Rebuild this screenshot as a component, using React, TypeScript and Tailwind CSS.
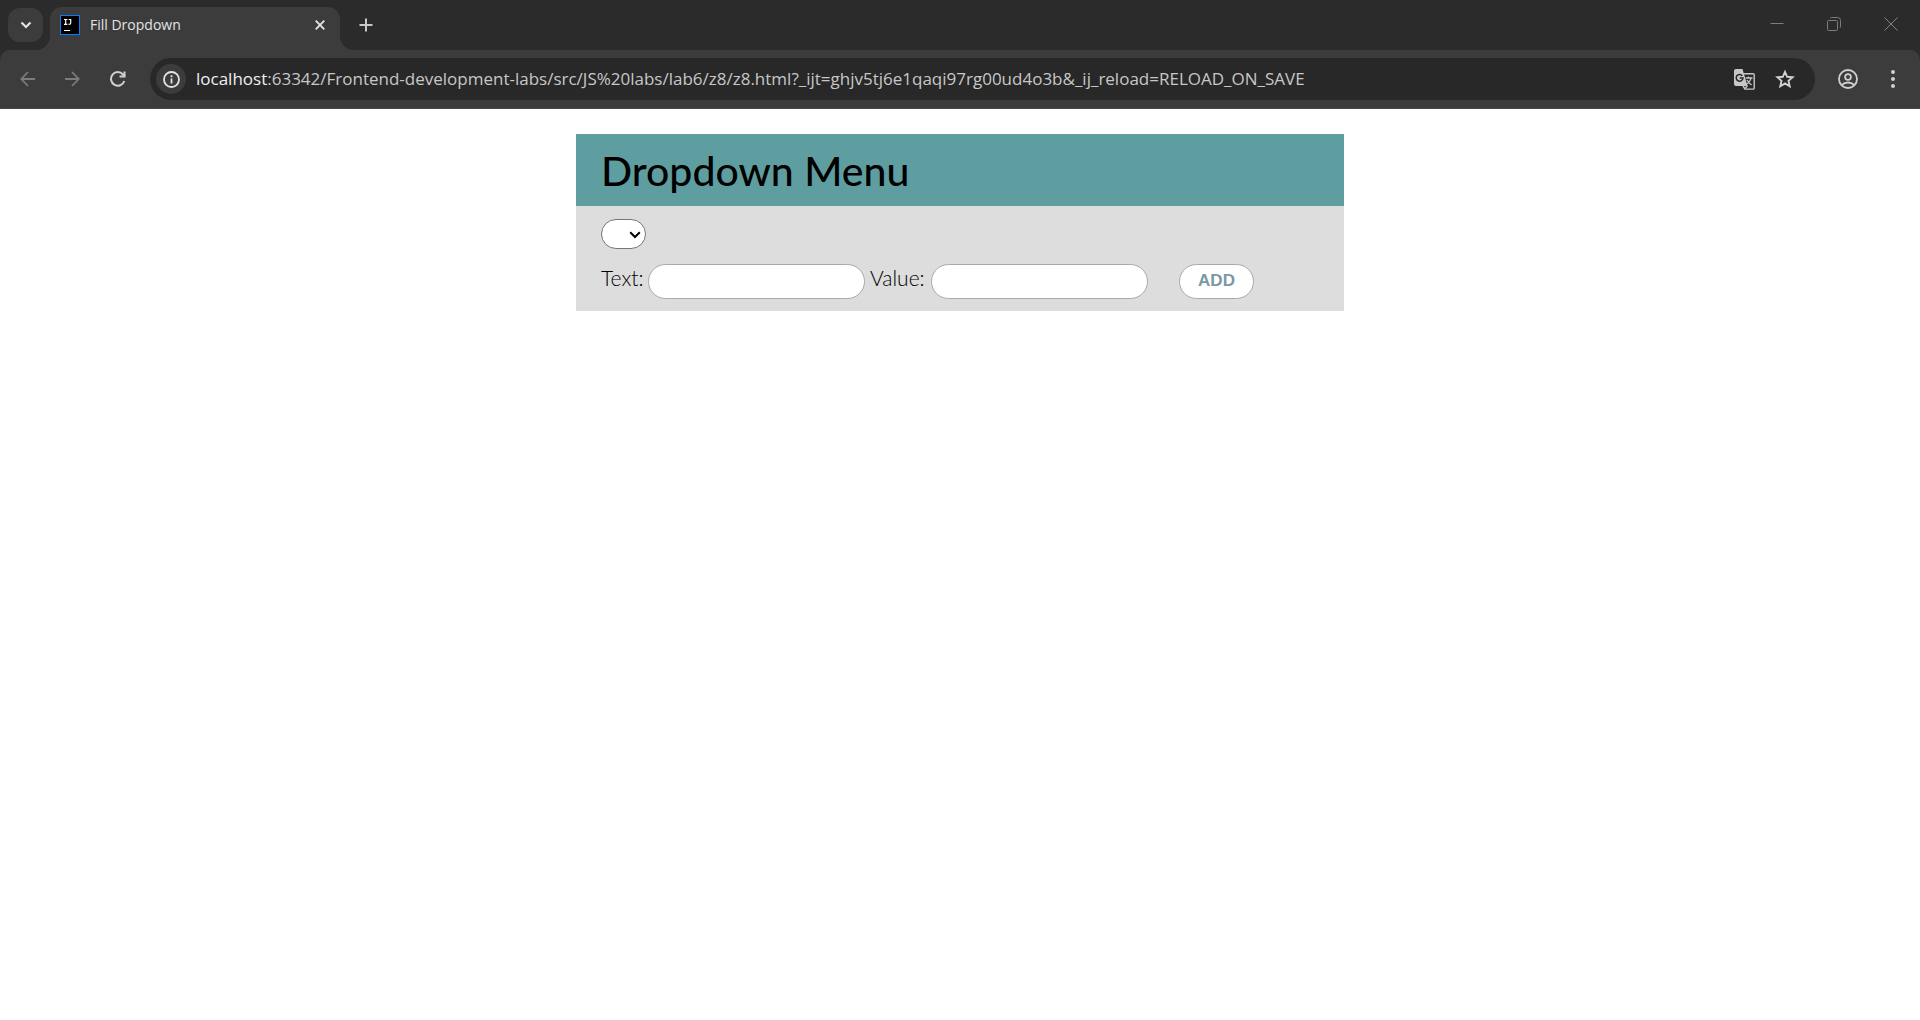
import { ReactNode } from "react";

function IconButton({ label, className = "", children }: { label: string; className?: string; children: ReactNode }) {
  return (
    <button type="button" aria-label={label} className={`flex shrink-0 items-center justify-center ${className}`}>
      {children}
    </button>
  );
}

function IdeaLogo() {
  return (
    <svg className="h-5 w-5 shrink-0" viewBox="0 0 20 20" aria-hidden="true">
      <rect width="20" height="20" fill="#087cfa" />
      <rect x="1" y="1" width="18" height="18" fill="#000" />
      <path d="M4 4.500h3.400M5.700 4.500v4.800M4 9.300h3.400M8.700 4.500h2v3.600c0 1-1 1.400-2.200 1M4 15.500h6" fill="none" stroke="#fff" strokeWidth="1.200" />
    </svg>
  );
}

function TabStrip() {
  return (
    <header className="flex h-[50px] items-end bg-[#2b2b2b] pl-2">
      <IconButton label="Search tabs" className="mb-2 h-[34px] w-[35px] rounded-xl bg-[#3c3c3c]">
        <svg width="12" height="8" viewBox="0 0 12 8" fill="none" stroke="#e3e3e3" strokeWidth="2.200">
          <path d="M1.500 1.500 6 6l4.500-4.500" />
        </svg>
      </IconButton>
      <div className="relative ml-[7px] flex h-[43px] w-[290px] items-center rounded-t-xl bg-[#3c3c3c] pb-2 pl-[10px] pr-3">
        <svg className="absolute -left-[14px] bottom-0" width="14" height="14" viewBox="0 0 14 14">
          <path d="M14 0v14H0A14 14 0 0 0 14 0z" fill="#3c3c3c" />
        </svg>
        <svg className="absolute -right-[14px] bottom-0" width="14" height="14" viewBox="0 0 14 14">
          <path d="M0 0v14h14A14 14 0 0 1 0 0z" fill="#3c3c3c" />
        </svg>
        <IdeaLogo />
        <h2 className="ml-[10px] flex-1 text-[14px] leading-5 text-[#e3e3e3]">Fill Dropdown</h2>
        <IconButton label="Close tab" className="h-4 w-4">
          <svg width="10" height="10" viewBox="0 0 10 10" stroke="#e3e3e3" strokeWidth="1.900">
            <path d="m.7.7 8.600 8.600M9.300.7.7 9.300" />
          </svg>
        </IconButton>
      </div>
      <IconButton label="New tab" className="mb-[18px] ml-[19px] h-[14px] w-[14px]">
        <svg width="14" height="14" viewBox="0 0 14 14" stroke="#c7c7c7" strokeWidth="2">
          <path d="M7 .5v13M.5 7h13" />
        </svg>
      </IconButton>
      <div className="mb-[19px] ml-auto flex items-center gap-[43px] pr-[22px]">
        <IconButton label="Minimize" className="h-[14px] w-[14px]">
          <svg width="14" height="14" stroke="#7d7d7d"><path d="M.5 6.500h13" /></svg>
        </IconButton>
        <IconButton label="Restore" className="h-[14px] w-[14px]">
          <svg width="14" height="14" fill="none" stroke="#7d7d7d">
            <rect x=".5" y="3.500" width="10" height="10" rx="1" />
            <path d="M3 1.200Q3.500.5 4.500.5h6q3 0 3 3v6q0 1-.7 1.500" />
          </svg>
        </IconButton>
        <IconButton label="Close window" className="h-[14px] w-[14px]">
          <svg width="14" height="14" stroke="#858585"><path d="m.5.5 13 13M13.500.5l-13 13" /></svg>
        </IconButton>
      </div>
    </header>
  );
}

function Toolbar() {
  return (
    <div className="bg-[#2b2b2b]">
      <div className="flex h-[59px] items-center rounded-t-[10px] border-b border-[#4a4a4a] bg-[#3c3c3c] pl-5 pr-[23px]">
        <IconButton label="Back" className="h-4 w-[15px]">
          <svg width="15" height="16" viewBox="0 0 15 16" fill="none" stroke="#7b7b7b" strokeWidth="1.800">
            <path d="M15 8H1.500M8 1 1.300 8 8 15" />
          </svg>
        </IconButton>
        <IconButton label="Forward" className="ml-[30px] h-4 w-[15px]">
          <svg width="15" height="16" viewBox="0 0 15 16" fill="none" stroke="#7b7b7b" strokeWidth="1.800">
            <path d="M0 8h13.500M7 1l6.700 7L7 15" />
          </svg>
        </IconButton>
        <IconButton label="Reload" className="ml-[30px] h-4 w-4">
          <svg width="16" height="16" viewBox="0 0 16 16" fill="none" stroke="#d0d0d0" strokeWidth="2">
            <path d="M14.300 10A6.800 6.800 0 1 1 13 3.500L15 5.500" />
            <path d="M14.500 .5v5H9.500" />
          </svg>
        </IconButton>
        <div className="ml-6 mr-8 flex h-[42px] flex-1 items-center rounded-full bg-[#282828] pl-[6px] pr-[20px]">
          <IconButton label="View site information" className="h-[30px] w-[30px] rounded-full bg-[#3c3c3c]">
            <svg width="17" height="17" viewBox="0 0 17 17" fill="none" stroke="#e3e3e3" strokeWidth="1.800">
              <circle cx="8.500" cy="8.500" r="7.500" />
              <path d="M8.500 7.500v5M8.500 4.300v1.900" />
            </svg>
          </IconButton>
          <div className="ml-[10px] flex-1 whitespace-nowrap text-[17px] leading-6 text-[#c7c7c7]">
            <span className="text-[#f0f0f0]">localhost</span>:63342/Frontend-development-labs/src/JS%20labs/lab6/z8/z8.html?_ijt=ghjv5tj6e1qaqi97rg00ud4o3b&amp;_ij_reload=RELOAD_ON_SAVE
          </div>
          <IconButton label="Translate this page" className="h-[21px] w-[21px]">
            <svg width="21" height="21" viewBox="0 0 21 21">
              <path d="M9.500 4.700h9.500q1.200 0 1.200 1.200v13q0 1.200-1.200 1.200h-8L9 17" fill="none" stroke="#c7c7c7" strokeWidth="1.400" />
              <path d="M2 0h6.500l5 17H2Q0 17 0 15V2Q0 0 2 0z" fill="#c7c7c7" />
              <path d="M8.300 6.700A3.400 3.400 0 1 0 9 9H5.700" fill="none" stroke="#282828" strokeWidth="1.500" />
              <path d="M11.500 9h7M14.500 7.500V9M17 9c-.5 3-2.500 5-5 6.500M13 11c1 2 2.700 3.500 4.500 5M10.500 20l3-3.200" fill="none" stroke="#c7c7c7" strokeWidth="1.300" />
            </svg>
          </IconButton>
          <IconButton label="Bookmark this tab" className="ml-[20px] h-[20px] w-[20px]">
            <svg width="20" height="20" viewBox="0 0 20 20" fill="none" stroke="#d0d0d0" strokeWidth="1.900">
              <path d="m10 2.800 2.200 5 5.400.5-4.100 3.600 1.200 5.300L10 14.400l-4.700 2.800 1.200-5.300L2.400 8.300l5.400-.5z" />
            </svg>
          </IconButton>
        </div>
        <IconButton label="Profile" className="-ml-[9px] h-5 w-5">
          <svg width="20" height="20" viewBox="0 0 20 20" fill="none" stroke="#d0d0d0" strokeWidth="1.800">
            <circle cx="10" cy="10" r="9" />
            <circle cx="10" cy="8" r="2.900" />
            <path d="M3.800 16q2.500-2.500 6.200-2.500t6.200 2.500" />
          </svg>
        </IconButton>
        <IconButton label="Browser menu" className="ml-[31px] h-[18px] w-[8px]">
          <svg width="4" height="18" viewBox="0 0 4 18" fill="#d0d0d0">
            <circle cx="2" cy="2" r="2" />
            <circle cx="2" cy="9" r="2" />
            <circle cx="2" cy="16" r="2" />
          </svg>
        </IconButton>
      </div>
    </div>
  );
}

function Field({ id, label, labelWidth }: { id: string; label: string; labelWidth: string }) {
  return (
    <>
      <label htmlFor={id} className={`whitespace-nowrap ${labelWidth}`}>{label}</label>
      <input id={id} type="text" className="h-[35px] w-[217px] rounded-full border border-[#a9a9a9] bg-white px-4" />
    </>
  );
}

export default function App() {
  return (
    <div className="min-h-screen bg-white font-['Open_Sans',sans-serif]">
      <TabStrip />
      <Toolbar />
      <main className="mx-auto mt-[25px] w-2/5 bg-[#ddd] font-['Lato',sans-serif] text-[21px] leading-7 text-black">
        <h1 className="flex h-[72px] items-center bg-[cadetblue] px-[25px] pt-[2px] text-[41px] font-medium leading-[50px]">Dropdown Menu</h1>
        <div className="px-[25px] pb-3 pt-[13px]">
          <div className="relative w-[45px]">
            <select aria-label="Menu" className="block h-[30px] w-[45px] appearance-none rounded-full border border-[#767676] bg-white" />
            <svg className="pointer-events-none absolute right-[5px] top-3" width="12" height="8" viewBox="0 0 12 8" fill="none" stroke="#000" strokeWidth="2">
              <path d="m1.200 1.200 4.800 4.800 4.800-4.800" />
            </svg>
          </div>
          <form className="mt-[15px] flex items-start font-light" onSubmit={(e) => e.preventDefault()}>
            <Field id="newItemText" label="Text:" labelWidth="w-[47px]" />
            <div className="w-[5px]" />
            <Field id="newItemValue" label="Value:" labelWidth="w-[61px]" />
            <button type="submit" className="ml-[31px] h-[35px] w-[75px] rounded-full border border-[#a9a9a9] bg-white pb-[2px] font-['Liberation_Sans',sans-serif] text-[17px] font-bold text-[#7b98a4]">
              ADD
            </button>
          </form>
        </div>
      </main>
    </div>
  );
}
